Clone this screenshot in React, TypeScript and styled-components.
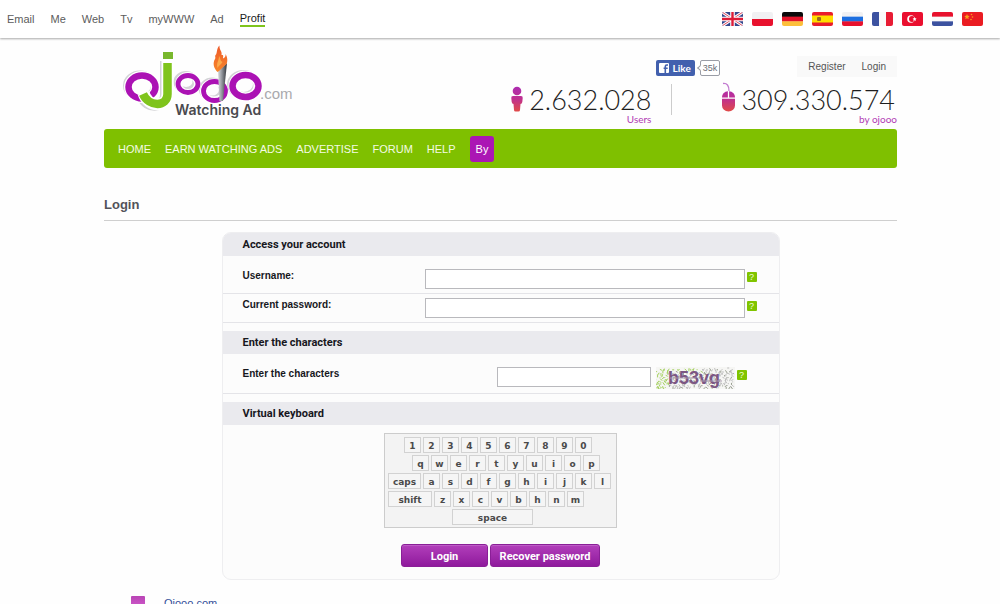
import React from "react";
import styled, { createGlobalStyle } from "styled-components";

const GlobalStyle = createGlobalStyle`
  *, *::before, *::after { box-sizing: border-box; }
  body {
    margin: 0;
    background: #fefefe;
    color: #1c1c22;
    font-family: "Liberation Sans", Arial, sans-serif;
    font-size: 11px;
    line-height: 14px;
  }
  button, input { font-family: inherit; }
`;

/* ---------- top bar ---------- */

const TopBar = styled.header`
  display: flex;
  justify-content: space-between;
  align-items: center;
  height: 38px;
  padding: 0 17px 0 7px;
  background: #fff;
  box-shadow: 0 1px 2px #a9a9a9;
`;

const TopLinks = styled.nav`
  display: flex;
  gap: 16px;
`;

const TopLink = styled.a<{ $active?: boolean }>`
  color: ${(p) => (p.$active ? "#1b1b1b" : "#5c5c5c")};
  text-decoration: none;
  padding-top: ${(p) => (p.$active ? "0" : "1px")};
  border-bottom: ${(p) => (p.$active ? "2px solid #7fc41c" : "none")};
`;

const Flags = styled.div`
  display: flex;
  gap: 9px;
`;

const FlagButton = styled.button`
  display: block;
  width: 21px;
  height: 14px;
  padding: 0;
  border: 0;
  border-radius: 2px;
  overflow: hidden;
  background: none;

  svg { display: block; }
`;

/* ---------- masthead ---------- */

const Page = styled.div`
  max-width: 794px;
  margin: 0 auto;
  padding-left: 1px;
`;

const Masthead = styled.div`
  display: flex;
  justify-content: space-between;
  height: 91px;
  padding: 6px 0 0 14px;
`;

const HeadSide = styled.div`
  display: flex;
  flex-direction: column;
  align-items: flex-end;
  padding-top: 12px;
`;

const HeadTop = styled.div`
  display: flex;
  align-items: flex-start;
`;

const LikeButton = styled.button`
  display: flex;
  align-items: center;
  gap: 4px;
  height: 16px;
  margin-top: 4px;
  padding: 0 4px 0 3px;
  border: 0;
  border-radius: 2px;
  background: #4260ae;
  color: #fff;
  font-family: Lato, sans-serif;
  font-size: 10px;
  font-weight: 700;
`;

const LikeCount = styled.span`
  position: relative;
  height: 16px;
  margin: 4px 77px 0 5px;
  padding: 0 2px;
  border: 1px solid #9a9da6;
  border-radius: 2px;
  background: #fff;
  color: #6a6d75;
  font-size: 9px;
  line-height: 15px;

  &::before {
    content: "";
    position: absolute;
    left: -3px;
    top: 5px;
    width: 4px;
    height: 4px;
    border-left: 1px solid #9a9da6;
    border-bottom: 1px solid #9a9da6;
    background: #fff;
    transform: rotate(45deg);
  }
`;

const AccountLinks = styled.nav`
  display: flex;
  gap: 16px;
  padding: 4px 11px 3px;
  background: #f9f9f9;
`;

const AccountLink = styled.a`
  color: #555;
  text-decoration: none;
  font-size: 10px;
`;

const Stats = styled.div`
  display: flex;
  align-items: flex-start;
  margin-top: 5px;
`;

const Stat = styled.div`
  display: grid;
  grid-template-columns: auto auto;
  column-gap: 5px;
`;

const StatIcon = styled.svg`
  display: block;
`;

const StatNumber = styled.span<{ $inset?: number }>`
  padding: 6px ${(p) => p.$inset || 0}px 0 0;
  color: #1e1e1e;
  font-family: Lato, sans-serif;
  font-size: 27px;
  font-weight: 300;
  line-height: 24px;
`;

const StatCaption = styled.span`
  grid-column: 1 / -1;
  justify-self: end;
  color: #b13bb4;
  font-family: Lato, sans-serif;
  font-size: 10px;
  line-height: 14px;
`;

const StatDivider = styled.div`
  width: 1px;
  height: 31px;
  margin: 2px 49px 0 20px;
  background: #ccc;
`;

/* ---------- navigation ---------- */

const MainNav = styled.nav`
  display: flex;
  align-items: center;
  gap: 14px;
  height: 39px;
  padding: 0 14px;
  border-radius: 3px;
  background: #7fc000;
`;

const MainLink = styled.a`
  color: #f4fbe4;
  text-decoration: none;
  padding-top: 1px;
`;

const ByLink = styled.a`
  padding: 6px;
  border-radius: 3px;
  background: #ab16b4;
  color: #fff;
  text-decoration: none;
`;

const Title = styled.h1`
  margin: 29px 0 11px;
  padding-bottom: 7px;
  border-bottom: 1px solid #cfcfcf;
  color: #53535a;
  font-size: 13px;
  line-height: 16px;
`;

/* ---------- login panel ---------- */

const Panel = styled.form`
  display: flex;
  flex-direction: column;
  gap: 8px;
  max-width: 558px;
  margin: 0 auto;
  padding-bottom: 12px;
  border: 1px solid #eeeef0;
  border-radius: 9px;
  background: #fcfcfc;
  overflow: hidden;
`;

const Section = styled.section``;

const SectionTitle = styled.h2`
  margin: 0;
  padding: 5px 20px 4px;
  background: #eaeaee;
  color: #17171d;
  font-family: Roboto, sans-serif;
  font-size: 11px;
  font-weight: 700;
  line-height: 14px;
`;

const Row = styled.div<{ $roomy?: boolean }>`
  display: flex;
  justify-content: space-between;
  align-items: flex-start;
  padding: ${(p) => (p.$roomy ? "13px" : "4px")} 22px 4px 20px;
  border-bottom: 1px solid #e4e4e8;
`;

const Label = styled.label`
  color: #17171d;
  font-size: 10px;
  font-weight: 700;
  line-height: 13px;
`;

const Field = styled.div<{ $inset?: boolean }>`
  display: flex;
  align-items: flex-start;
  gap: 2px;
  margin-right: ${(p) => (p.$inset ? "10px" : "0")};
`;

const TextInput = styled.input<{ $short?: boolean }>`
  width: ${(p) => (p.$short ? "154px" : "320px")};
  height: 20px;
  margin-right: ${(p) => (p.$short ? "3px" : "0")};
  padding: 0 4px;
  border: 1px solid #b9b9bd;
  background: #fff;
  font-size: 11px;
`;

const HelpButton = styled.button`
  width: 10px;
  height: 10px;
  margin-top: 3px;
  padding: 0;
  border: 0;
  border-radius: 1px;
  background: #80c400;
  color: #f1ffd6;
  font-size: 9px;
  line-height: 10px;
`;

/* ---------- keyboard ---------- */

const Keyboard = styled.div`
  display: flex;
  flex-direction: column;
  gap: 2px;
  width: 233px;
  margin: 8px auto 16px;
  padding: 3px 3px 2px;
  border: 1px solid #ccc;
  background: #f3f3f3;
`;

const KeyRow = styled.div<{ $indent: number }>`
  display: flex;
  gap: 2px;
  padding-left: ${(p) => p.$indent}px;
`;

const Key = styled.button<{ $width?: number }>`
  width: ${(p) => p.$width || 17}px;
  height: 16px;
  padding: 2px 0 0;
  border: 1px solid #d2d2d2;
  background: #f5f5f5;
  color: #4a4a4a;
  font-family: "DejaVu Sans", sans-serif;
  font-size: 9px;
  font-weight: 700;
  line-height: 12px;
`;

const Actions = styled.div`
  display: flex;
  justify-content: center;
  gap: 2px;
`;

const ActionButton = styled.button<{ $width: number }>`
  width: ${(p) => p.$width}px;
  height: 23px;
  padding: 1px 0 0;
  border: 1px solid #8a1f97;
  border-radius: 3px;
  background: linear-gradient(#b23fbb, #8f1a9c);
  box-shadow: inset 0 1px 0 #bd5cc6;
  color: #fff;
  font-family: Roboto, sans-serif;
  font-size: 11px;
  font-weight: 700;
`;

const Footer = styled.footer`
  display: flex;
  gap: 19px;
  padding: 16px 27px 24px;
`;

const Swatch = styled.span`
  width: 14px;
  height: 14px;
  border-radius: 1px;
  background: linear-gradient(#b944b5, #d45fd0);
`;

const FooterLink = styled.a`
  color: #34509a;
  text-decoration: none;
`;

/* ---------- drawings ---------- */

const stripes = (dir: "h" | "v", colors: string[]) =>
  colors.map((c, i) =>
    dir === "h" ? (
      <rect key={i} y={(14 / colors.length) * i} width="21" height={14 / colors.length + 0.3} fill={c} />
    ) : (
      <rect key={i} x={7 * i} width="7" height="14" fill={c} />
    )
  );

const flags: { name: string; art: React.ReactNode }[] = [
  {
    name: "English",
    art: (
      <>
        <rect width="21" height="14" fill="#35478c" />
        <path d="M0 0L21 14M21 0L0 14" stroke="#fff" strokeWidth="3" />
        <path d="M0 0L21 14M21 0L0 14" stroke="#e0455c" strokeWidth="1" />
        <path d="M10.5 0V14M0 7H21" stroke="#fff" strokeWidth="4.6" />
        <path d="M10.5 0V14M0 7H21" stroke="#dc1c38" strokeWidth="2.4" />
      </>
    ),
  },
  { name: "Polski", art: stripes("h", ["#f1f1f3", "#e8112d"]) },
  { name: "Deutsch", art: stripes("h", ["#0a0a0a", "#e3132a", "#fcbf3a"]) },
  {
    name: "Español",
    art: (
      <>
        <rect width="21" height="14" fill="#ea1c2c" />
        <rect y="3.5" width="21" height="7" fill="#ffde00" />
        <rect x="5" y="5" width="4" height="4" rx="1" fill="#9a6a1c" />
      </>
    ),
  },
  { name: "Русский", art: stripes("h", ["#f1f1f3", "#1d6fe0", "#e8112d"]) },
  { name: "Français", art: stripes("v", ["#3c52a0", "#fafafa", "#e81c34"]) },
  {
    name: "Türkçe",
    art: (
      <>
        <rect width="21" height="14" fill="#ea0f2f" />
        <circle cx="9" cy="7" r="3.8" fill="#fff" />
        <circle cx="10" cy="7" r="3" fill="#ea0f2f" />
        <path d="M12.6 5l.6 1.3 1.4.2-1 1 .2 1.4-1.2-.7-1.3.7.3-1.4-1-1 1.4-.2z" fill="#fff" />
      </>
    ),
  },
  { name: "Nederlands", art: stripes("h", ["#e8112d", "#fafafa", "#3c52a0"]) },
  {
    name: "中文",
    art: (
      <>
        <rect width="21" height="14" fill="#ea1c22" />
        <path d="M5 2l.8 1.8 1.9.2-1.4 1.3.4 1.9L5 6.2l-1.7 1 .4-1.9L2.3 4l1.9-.2z" fill="#f9a01b" />
        <circle cx="9.5" cy="2.5" r=".8" fill="#f9a01b" />
        <circle cx="10.5" cy="5" r=".8" fill="#f9a01b" />
        <circle cx="9" cy="7.5" r=".8" fill="#f9a01b" />
      </>
    ),
  },
];

const Logo = () => (
  <svg width="180" height="76" viewBox="118 44 180 76" role="img" aria-label="Ojooo Watching Ad">
    <defs>
      <linearGradient id="torch" x1="0" x2="1">
        <stop offset="0" stopColor="#d8dade" />
        <stop offset=".45" stopColor="#8d9198" />
        <stop offset="1" stopColor="#303338" />
      </linearGradient>
      <linearGradient id="flame" x1="0" y1="0" x2="0" y2="1">
        <stop offset="0" stopColor="#ee5a2a" />
        <stop offset="1" stopColor="#f7862a" />
      </linearGradient>
    </defs>
    <g fill="none" stroke="#d3d3d6">
      <ellipse cx="140" cy="85.5" rx="14" ry="12" strokeWidth="6" />
      <ellipse cx="186" cy="82" rx="9.5" ry="8" strokeWidth="6" />
      <ellipse cx="212" cy="89.5" rx="10" ry="9" strokeWidth="6" />
      <ellipse cx="243.5" cy="84.5" rx="13" ry="11" strokeWidth="7" />
      <path d="M165 61V95C165 109 146 109 142 97" strokeWidth="10" />
      <path d="M162 54H170" strokeWidth="6" />
    </g>
    <g fill="none" stroke="#fff">
      <ellipse cx="142" cy="87" rx="13.5" ry="11.5" strokeWidth="9" />
      <ellipse cx="188" cy="84" rx="9.5" ry="8.5" strokeWidth="7" />
      <ellipse cx="214" cy="91" rx="10.5" ry="9" strokeWidth="7" />
      <ellipse cx="245.5" cy="86" rx="12.5" ry="11" strokeWidth="9" />
    </g>
    <g fill="none" stroke="#ab12b4">
      <ellipse cx="142" cy="87" rx="13.5" ry="11.5" strokeWidth="6.5" />
      <ellipse cx="188" cy="84" rx="10" ry="8.5" strokeWidth="4.8" />
      <ellipse cx="214.5" cy="91" rx="11" ry="9.5" strokeWidth="4.8" />
      <ellipse cx="245.5" cy="86" rx="13" ry="11" strokeWidth="6.5" />
    </g>
    <path d="M167.5 60V94C167.5 108 148 108 143.5 93" fill="none" stroke="#fff" strokeWidth="12" />
    <path d="M167.5 63V94C167.5 107 149 107.5 143 94" fill="none" stroke="#7fc41c" strokeWidth="8.5" />
    <rect x="162" y="51" width="12" height="9" fill="#fff" />
    <rect x="163" y="52" width="10" height="7" fill="#79b82e" />
    <path d="M218 71L227 63L223 101H219.5Z" fill="url(#torch)" />
    <path
      d="M217.5 72C213.5 68 212.5 63 215 59C216 57.5 214.5 56.5 215.5 55C217.5 54 216 49 219.5 45.5C219 50 222.5 51 221.5 55C224 54.5 223 57 223 58.5C225 58 226 55.5 225.5 54C228 58 227.5 62 226.5 64L219 71Z"
      fill="url(#flame)"
    />
    <path d="M217.5 68C216 63 219 61 219 56C221 59 220 61 222.5 62C221 65 219 65 217.5 68Z" fill="#fba94a" />
    <text x="260" y="99" fontFamily="Liberation Sans, Arial, sans-serif" fontSize="15" fill="#a9a9ad">.com</text>
    <text x="175" y="115" fontFamily="Inter, sans-serif" fontWeight="600" fontSize="14" fill="#4a4a4e">Watching Ad</text>
  </svg>
);

const StatGradient = ({ id }: { id: string }) => (
  <linearGradient id={id} gradientUnits="userSpaceOnUse" x1="0" y1="2" x2="0" y2="29">
    <stop offset="0" stopColor="#a82bb8" />
    <stop offset=".55" stopColor="#bf3090" />
    <stop offset="1" stopColor="#e04a4a" />
  </linearGradient>
);

const PersonIcon = () => (
  <StatIcon width="14" height="30" viewBox="0 0 14 30" aria-hidden="true">
    <defs><StatGradient id="person" /></defs>
    <g fill="url(#person)">
      <circle cx="7" cy="9" r="4.3" />
      <path d="M3 14H11Q13 14 12.7 16L12.3 20Q12 22 10.5 22L10 28Q9.9 29.5 8.5 29.5H5.5Q4.1 29.5 4 28L3.5 22Q2 22 1.7 20L1.3 16Q1 14 3 14Z" />
    </g>
  </StatIcon>
);

const MouseIcon = () => (
  <StatIcon width="15" height="30" viewBox="0 0 15 30" aria-hidden="true">
    <defs><StatGradient id="mouse" /></defs>
    <path d="M2 1.5C6 1 8 3.5 8 9" fill="none" stroke="#c27bd0" strokeWidth="1.3" />
    <g fill="url(#mouse)">
      <path d="M1 15.5C1 12 3.5 9.5 6.9 9.3V15.5Z" />
      <path d="M8.1 9.3C11.5 9.5 14 12 14 15.5H8.1Z" />
      <path d="M1 16.7H14V23.5A6.5 6 0 0 1 1 23.5Z" />
    </g>
  </StatIcon>
);

const FacebookMark = () => (
  <svg width="10" height="10" viewBox="0 0 10 10" aria-hidden="true">
    <rect width="10" height="10" rx="1" fill="#fff" />
    <path d="M9 2H7.8Q6.3 2 6.3 3.6V10M4.6 5.3H8.7" fill="none" stroke="#4260ae" strokeWidth="1.6" />
  </svg>
);

const speckles = Array.from({ length: 260 }, (_, i) => {
  const x = (i * 37.7 + (i % 7) * 5.3) % 78;
  const y = (i * 13.3 + (i % 5) * 3.1) % 20;
  const green = x < 13 || (y < 3 && x < 45);
  return { x, y, dx: ((i * 7) % 5) - 2, dy: ((i * 3) % 4) - 1, color: green ? "#a5d160" : i % 3 ? "#bdbdbd" : "#9aa092" };
});

const Captcha = () => (
  <svg width="79" height="22" viewBox="0 0 79 22" role="img" aria-label="Captcha">
    <rect width="79" height="22" fill="#f6f6f4" />
    {speckles.map((s, i) => (
      <path key={i} d={`M${s.x} ${s.y + 1}l${s.dx} ${s.dy + 1}`} stroke={s.color} strokeWidth="1" />
    ))}
    <text x="12" y="17" fontFamily="Liberation Sans, Arial, sans-serif" fontWeight="700" fontSize="18" fill="#7b5683">b53vg</text>
    <path d="M14 11H40M44 14H66" stroke="#a99bad" strokeWidth="1" />
  </svg>
);

const keyRows = [
  { indent: 16, keys: "1234567890".split("") },
  { indent: 24, keys: "qwertyuiop".split("") },
  { indent: 0, keys: ["caps", ..."asdfghijkl".split("")] },
  { indent: 0, keys: ["shift", ..."zxcvbhnm".split("")] },
  { indent: 64, keys: ["space"] },
];

const keyWidths: Record<string, number> = { caps: 33, shift: 44, space: 81 };

const Help = () => <HelpButton type="button" aria-label="Help">?</HelpButton>;

export default function App() {
  return (
    <>
      <GlobalStyle />
      <TopBar>
        <TopLinks>
          {["Email", "Me", "Web", "Tv", "myWWW", "Ad", "Profit"].map((t) => (
            <TopLink key={t} href="#" $active={t === "Profit"}>{t}</TopLink>
          ))}
        </TopLinks>
        <Flags>
          {flags.map((f) => (
            <FlagButton key={f.name} aria-label={f.name}>
              <svg width="21" height="14" viewBox="0 0 21 14">{f.art}</svg>
            </FlagButton>
          ))}
        </Flags>
      </TopBar>

      <Page>
        <Masthead>
          <Logo />
          <HeadSide>
            <HeadTop>
              <LikeButton><FacebookMark />Like</LikeButton>
              <LikeCount>35k</LikeCount>
              <AccountLinks>
                <AccountLink href="#">Register</AccountLink>
                <AccountLink href="#">Login</AccountLink>
              </AccountLinks>
            </HeadTop>
            <Stats>
              <Stat>
                <PersonIcon />
                <StatNumber>2.632.028</StatNumber>
                <StatCaption>Users</StatCaption>
              </Stat>
              <StatDivider />
              <Stat>
                <MouseIcon />
                <StatNumber $inset={2}>309.330.574</StatNumber>
                <StatCaption>by ojooo</StatCaption>
              </Stat>
            </Stats>
          </HeadSide>
        </Masthead>

        <MainNav>
          {["HOME", "EARN WATCHING ADS", "ADVERTISE", "FORUM", "HELP"].map((t) => (
            <MainLink key={t} href="#">{t}</MainLink>
          ))}
          <ByLink href="#">By</ByLink>
        </MainNav>

        <Title>Login</Title>

        <Panel>
          <Section>
            <SectionTitle>Access your account</SectionTitle>
            <Row $roomy>
              <Label htmlFor="username">Username:</Label>
              <Field><TextInput id="username" /><Help /></Field>
            </Row>
            <Row>
              <Label htmlFor="password">Current password:</Label>
              <Field><TextInput id="password" type="password" /><Help /></Field>
            </Row>
          </Section>
          <Section>
            <SectionTitle>Enter the characters</SectionTitle>
            <Row $roomy>
              <Label htmlFor="characters">Enter the characters</Label>
              <Field $inset><TextInput id="characters" $short /><Captcha /><Help /></Field>
            </Row>
          </Section>
          <Section>
            <SectionTitle>Virtual keyboard</SectionTitle>
            <Keyboard>
              {keyRows.map((row) => (
                <KeyRow key={row.keys[0]} $indent={row.indent}>
                  {row.keys.map((k) => (
                    <Key key={k} type="button" $width={keyWidths[k]}>{k}</Key>
                  ))}
                </KeyRow>
              ))}
            </Keyboard>
            <Actions>
              <ActionButton type="submit" $width={87}>Login</ActionButton>
              <ActionButton type="button" $width={110}>Recover password</ActionButton>
            </Actions>
          </Section>
        </Panel>

        <Footer>
          <Swatch />
          <FooterLink href="#">Ojooo.com</FooterLink>
        </Footer>
      </Page>
    </>
  );
}
